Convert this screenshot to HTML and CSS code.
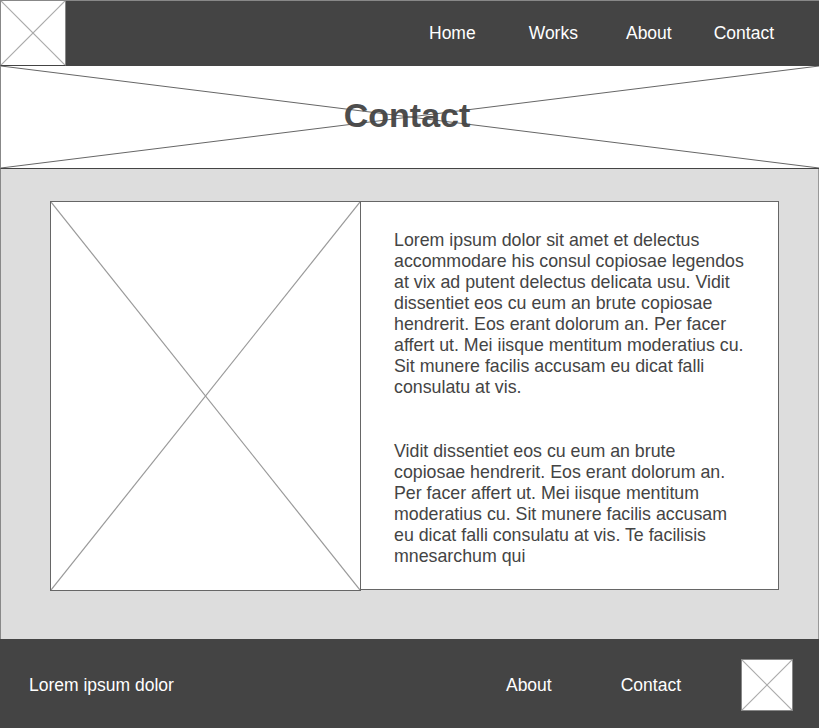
FILE: index.html
```html
<!DOCTYPE html>
<html>
<head>
<meta charset="utf-8">
<link rel="stylesheet" href="styles.css">
</head>
<body>
<header class="site-header">
  <div class="logo ph">
    <svg class="x" viewBox="0 0 100 100" preserveAspectRatio="none"><line x1="0" y1="0" x2="100" y2="100"/><line x1="100" y1="0" x2="0" y2="100"/></svg>
  </div>
  <nav class="nav">
    <a class="nav-link home">Home</a>
    <a class="nav-link works">Works</a>
    <a class="nav-link about">About</a>
    <a class="nav-link contact">Contact</a>
  </nav>
</header>
<section class="hero">
  <svg class="x hero-x" viewBox="0 0 100 100" preserveAspectRatio="none"><line x1="0" y1="0" x2="100" y2="100"/><line x1="100" y1="0" x2="0" y2="100"/></svg>
  <h1 class="hero-title">Contact</h1>
</section>
<main class="main">
  <div class="card">
    <div class="card-img ph">
      <svg class="x" viewBox="0 0 100 100" preserveAspectRatio="none"><line x1="0" y1="0" x2="100" y2="100"/><line x1="100" y1="0" x2="0" y2="100"/></svg>
    </div>
    <div class="card-text">
      <p class="para">Lorem ipsum dolor sit amet et delectus accommodare his consul copiosae legendos at vix ad putent delectus delicata usu. Vidit dissentiet eos cu eum an brute copiosae hendrerit. Eos erant dolorum an. Per facer affert ut. Mei iisque mentitum moderatius cu. Sit munere facilis accusam eu dicat falli consulatu at vis.</p>
      <p class="para second">Vidit dissentiet eos cu eum an brute copiosae hendrerit. Eos erant dolorum an. Per facer affert ut. Mei iisque mentitum moderatius cu. Sit munere facilis accusam eu dicat falli consulatu at vis. Te facilisis mnesarchum qui</p>
    </div>
  </div>
</main>
<footer class="site-footer">
  <span class="foot-text">Lorem ipsum dolor</span>
  <a class="foot-link f-about">About</a>
  <a class="foot-link f-contact">Contact</a>
  <div class="foot-logo ph">
    <svg class="x" viewBox="0 0 100 100" preserveAspectRatio="none"><line x1="0" y1="0" x2="100" y2="100"/><line x1="100" y1="0" x2="0" y2="100"/></svg>
  </div>
</footer>
</body>
</html>
```
FILE: styles.css
```css
* { box-sizing: border-box; }
html, body { margin: 0; padding: 0; }
body {
  width: 819px;
  font-family: "Liberation Sans", Arial, sans-serif;
  color: #444;
  background: #fff;
}
.ph { position: relative; background: #fff; }
.x {
  position: absolute;
  left: 0; top: 0;
  width: 100%; height: 100%;
}
.x line { stroke: #aaa; stroke-width: 1.2; vector-effect: non-scaling-stroke; }

.site-header {
  height: 66px;
  background: #444;
  border-top: 1px solid #888;
  display: flex;
  align-items: stretch;
}
.logo {
  width: 66px;
  height: 66px;
  margin-top: -1px;
  border: 1px solid #888;
  border-bottom-color: #444;
}
.nav {
  flex: 1;
  display: flex;
  justify-content: flex-end;
  align-items: center;
  padding-right: 45px;
  padding-bottom: 1px;
}
.nav-link {
  color: #fff;
  font-size: 17.5px;
}
.works { margin-left: 53px; }
.about { margin-left: 48px; }
.contact { margin-left: 42px; }

.hero {
  position: relative;
  height: 103px;
  border-left: 1px solid #888;
  border-bottom: 1px solid #444;
  display: flex;
  align-items: center;
  justify-content: center;
}
.hero-x line { stroke: #666; stroke-width: 1; }
.hero-title {
  position: relative;
  margin: 0 6px 3px 0;
  font-size: 34px;
  font-weight: bold;
  color: #444;
  opacity: 0.95;
}

.main {
  background: #ddd;
  height: 470px;
  border-left: 1px solid #888;
  border-right: 1px solid #999;
  padding: 32px 39px 0 49px;
}
.card {
  display: flex;
  align-items: flex-start;
}
.card-img {
  width: 311px;
  height: 390px;
  border: 1px solid #666;
  flex: none;
}
.card-img .x line { stroke: #999; }
.card-text {
  width: 420px;
  height: 389px;
  margin-left: -1px;
  background: #fff;
  border: 1px solid #666;
  padding: 28px 30px 0 33px;
}
.para {
  margin: 0;
  font-size: 17.8px;
  line-height: 21px;
  color: #444;
}
.para.second { margin-top: 43px; }

.site-footer {
  height: 89px;
  background: #444;
  display: flex;
  align-items: center;
  padding: 3px 26px 0 29px;
  color: #fff;
}
.foot-text { font-size: 17.5px; flex: 1; margin-top: 1px; }
.foot-link { font-size: 17.5px; color: #fff; margin-top: 1px; }
.f-contact { margin-left: 69px; }
.foot-logo {
  width: 52px;
  height: 52px;
  margin-left: 60px;
  border: 1px solid #888;
}
```
